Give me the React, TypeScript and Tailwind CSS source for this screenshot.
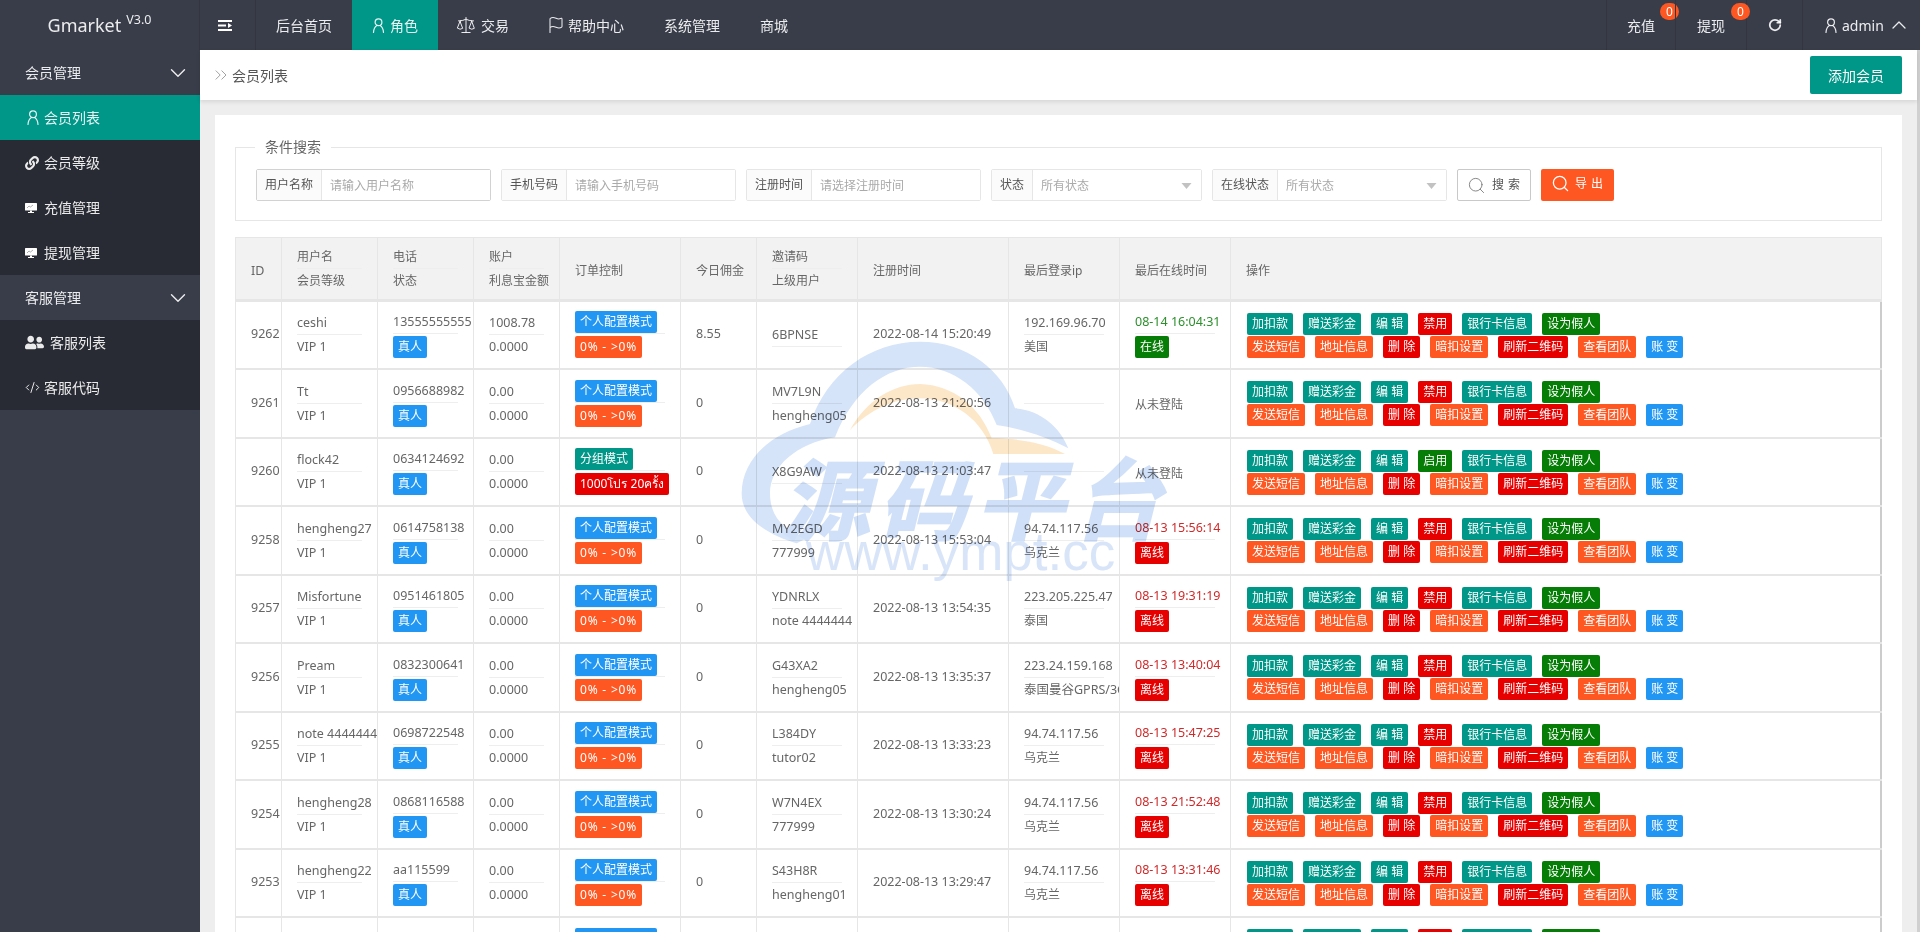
import { ChevronDown, ChevronUp, ChevronsRight, CodeXml, Flag, RotateCw, Scale, Search } from "lucide-react";
import { FaLink, FaUserFriends } from "react-icons/fa";

const teal = "bg-[#009688]";
const orange = "bg-[#FF5722]";
const red = "bg-[#e60000]";
const green = "bg-[#067d06]";
const blue = "bg-[#2196F3]";

type Row = {
    id: string;
    name: string;
    phone: string;
    real?: boolean;
    money: string;
    groupMode?: boolean;
    today: string;
    code: string;
    parent: string;
    date: string;
    ip: string;
    area: string;
    last: string;
    online?: boolean;
    enabled?: boolean;
};

const rows: Row[] = [
    { id: "9262", name: "ceshi", phone: "13555555555", money: "1008.78", today: "8.55", code: "6BPNSE", parent: "", date: "2022-08-14 15:20:49", ip: "192.169.96.70", area: "美国", last: "08-14 16:04:31", online: true },
    { id: "9261", name: "Tt", phone: "0956688982", money: "0.00", today: "0", code: "MV7L9N", parent: "hengheng05", date: "2022-08-13 21:20:56", ip: "", area: "", last: "" },
    { id: "9260", name: "flock42", phone: "0634124692", money: "0.00", groupMode: true, today: "0", code: "X8G9AW", parent: "", date: "2022-08-13 21:03:47", ip: "", area: "", last: "", enabled: true },
    { id: "9258", name: "hengheng27", phone: "0614758138", money: "0.00", today: "0", code: "MY2EGD", parent: "777999", date: "2022-08-13 15:53:04", ip: "94.74.117.56", area: "乌克兰", last: "08-13 15:56:14" },
    { id: "9257", name: "Misfortune", phone: "0951461805", money: "0.00", today: "0", code: "YDNRLX", parent: "note 4444444", date: "2022-08-13 13:54:35", ip: "223.205.225.47", area: "泰国", last: "08-13 19:31:19" },
    { id: "9256", name: "Pream", phone: "0832300641", money: "0.00", today: "0", code: "G43XA2", parent: "hengheng05", date: "2022-08-13 13:35:37", ip: "223.24.159.168", area: "泰国曼谷GPRS/3G", last: "08-13 13:40:04" },
    { id: "9255", name: "note 4444444", phone: "0698722548", money: "0.00", today: "0", code: "L384DY", parent: "tutor02", date: "2022-08-13 13:33:23", ip: "94.74.117.56", area: "乌克兰", last: "08-13 15:47:25" },
    { id: "9254", name: "hengheng28", phone: "0868116588", money: "0.00", today: "0", code: "W7N4EX", parent: "777999", date: "2022-08-13 13:30:24", ip: "94.74.117.56", area: "乌克兰", last: "08-13 21:52:48" },
    { id: "9253", name: "hengheng22", phone: "aa115599", money: "0.00", today: "0", code: "S43H8R", parent: "hengheng01", date: "2022-08-13 13:29:47", ip: "94.74.117.56", area: "乌克兰", last: "08-13 13:31:46" },
    { id: "9252", name: "hengheng21", phone: "0868116500", money: "0.00", today: "0", code: "K22M7Q", parent: "hengheng01", date: "2022-08-13 13:20:11", ip: "94.74.117.56", area: "乌克兰", last: "08-13 13:25:02" },
];

function Tag({ color, children }: { color: string; children: React.ReactNode }) {
    return <span className={`${color} block h-[22px] w-fit rounded-[2px] px-[5px] text-[12px] leading-[22px] whitespace-nowrap text-white`}>{children}</span>;
}

function UserIcon({ className }: { className?: string }) {
    return (
        <svg viewBox="0 0 12 15" fill="none" stroke="currentColor" strokeWidth="1.2" className={className}>
            <circle cx="6" cy="4.2" r="3.4" />
            <path d="M1 14.5C1.2 11 2.6 8.8 4.4 7.6M11 14.5C10.8 11 9.4 8.8 7.6 7.6" strokeLinecap="round" />
        </svg>
    );
}

function BoardIcon() {
    return (
        <svg viewBox="0 0 12 12" className="h-[12px] w-[12px] text-white" fill="currentColor">
            <rect x="0" y="1" width="12" height="7.5" rx="0.6" />
            <path d="M5 8.5h2v1.5h2V11H3v-1h2z" />
            <path d="M2 6l2-2 1.5 1L8 3" stroke="#777" strokeWidth="0.6" fill="none" />
        </svg>
    );
}

function Line({ children, cjk }: { children?: React.ReactNode; cjk?: boolean }) {
    return <div className={`${cjk ? "text-[12px]" : "text-[12.5px]"} h-[23px] leading-[23px] whitespace-nowrap`}>{children}</div>;
}

function Stack({ top, bottom, cjkTop, cjkBottom }: { top?: React.ReactNode; bottom?: React.ReactNode; cjkTop?: boolean; cjkBottom?: boolean }) {
    return (
        <div>
            {top ? <Line cjk={cjkTop}>{top}</Line> : null}
            <div className="border-b border-[#eeeeee]" />
            {bottom ? <Line cjk={cjkBottom}>{bottom}</Line> : null}
        </div>
    );
}

function BadgeStack({ top, children, topClass }: { top: string; children: React.ReactNode; topClass?: string }) {
    return (
        <div>
            <div className={`${topClass ?? ""} h-[23px] border-b border-[#eeeeee] text-[12.5px] leading-[22px] whitespace-nowrap`}>{top}</div>
            <div className="mt-[2px] h-[22px]">{children}</div>
        </div>
    );
}

function FormGroup({ label, labelW, w, placeholder, select, strong }: { label: string; labelW: string; w: string; placeholder: string; select?: boolean; strong?: boolean }) {
    return (
        <div className={`${w} flex h-[32px] shrink-0 rounded-[2px] border ${strong ? "border-[#d2d2d2]" : "border-[#e6e6e6]"}`}>
            <div className={`${labelW} flex shrink-0 items-center justify-center border-r border-[#e6e6e6] bg-[#fbfbfb] text-[12px] text-[#555]`}>{label}</div>
            <div className="relative flex-1">
                <input readOnly placeholder={placeholder} className="h-full w-full bg-white px-[8px] pt-[1px] text-[12px] outline-none placeholder:text-[#aaaaaa]" />
                {select ? (
                    <svg viewBox="0 0 10 6" className="absolute top-[13px] right-[9px] h-[6px] w-[11px] text-[#c2c2c2]" fill="currentColor">
                        <path d="M0 0h10L5 6z" />
                    </svg>
                ) : null}
            </div>
        </div>
    );
}

function SideGroup({ label }: { label: string }) {
    return (
        <div className="flex h-[45px] items-center justify-between bg-[#393d49] pr-[9px] pl-[25px] text-[14px] text-white/90">
            <span>{label}</span>
            <ChevronDown size={26} strokeWidth={1.3} />
        </div>
    );
}

function SideItem({ icon, label, active, gap }: { icon: React.ReactNode; label: string; active?: boolean; gap?: string }) {
    return (
        <div className={`${active ? "bg-[#009688]" : "bg-[#282b33]"} flex h-[45px] items-center pl-[25px] text-[14px] text-white/90`}>
            <span className={`${gap ?? "w-[19px]"} flex shrink-0 items-center`}>{icon}</span>
            <span>{label}</span>
        </div>
    );
}

function HeadCell({ top, bottom }: { top: string; bottom?: string }) {
    if (!bottom) return <span className="text-[12px]">{top}</span>;
    return <Stack top={top} bottom={bottom} cjkTop cjkBottom />;
}

function Actions({ enabled }: { enabled?: boolean }) {
    return (
        <div className="ml-[1px] w-[460px] pt-[1px]">
            <div className="flex h-[23px] gap-[10px]">
                <Tag color={teal}>加扣款</Tag>
                <Tag color={teal}>赠送彩金</Tag>
                <Tag color={teal}>编 辑</Tag>
                <Tag color={enabled ? green : red}>{enabled ? "启用" : "禁用"}</Tag>
                <Tag color={teal}>银行卡信息</Tag>
                <Tag color={green}>设为假人</Tag>
            </div>
            <div className="flex h-[22px] gap-[10px]">
                <Tag color={orange}>发送短信</Tag>
                <Tag color={orange}>地址信息</Tag>
                <Tag color={red}>删 除</Tag>
                <Tag color={orange}>暗扣设置</Tag>
                <Tag color={red}>刷新二维码</Tag>
                <Tag color={orange}>查看团队</Tag>
                <Tag color={blue}>账 变</Tag>
            </div>
        </div>
    );
}

const thClass = "border border-[#e6e6e6] border-b-[3px] px-[15px] text-left font-normal whitespace-nowrap text-[#666]";
const tdClass = "overflow-hidden border border-[#e6e6e6] border-b-2 px-[15px] text-[#666]";

export default function App() {
    return (
        <div className="relative h-[932px] w-full overflow-hidden bg-[#eeeeee] font-['Noto_Sans','Noto_Sans_CJK_SC',sans-serif]">
            {/* top nav */}
            <header className="flex h-[50px] items-stretch bg-[#393d49] text-[14px] text-white/90">
                <div className="flex w-[200px] shrink-0 items-start justify-center border-r border-[#33363f] pt-[11px]">
                    <span className="text-[18px] leading-[28px] text-white/90">Gmarket</span>
                    <span className="ml-[5px] text-[12.5px] leading-[18px] text-white/90">V3.0</span>
                </div>
                <div className="flex w-[56px] shrink-0 items-center justify-center border-r border-[#33363f] pr-[6px]">
                    <svg viewBox="0 0 14 11" className="h-[11px] w-[14px]" fill="white">
                        <rect width="14" height="2" />
                        <rect y="4.5" width="8" height="2" />
                        <rect y="9" width="14" height="2" />
                        <path d="M10 3l4 2.5L10 8z" />
                    </svg>
                </div>
                <div className="flex items-center px-[20px]">后台首页</div>
                <div className="flex items-center gap-[5px] bg-[#009688] px-[20px]">
                    <UserIcon className="h-[15px] w-[13px]" />
                    角色
                </div>
                <div className="flex items-center gap-[5px] px-[20px]">
                    <Scale size={20} strokeWidth={1.2} className="-ml-[2px]" />
                    交易
                </div>
                <div className="flex items-center gap-[3px] px-[20px]">
                    <Flag size={18} strokeWidth={1.4} className="-ml-[2px]" />
                    帮助中心
                </div>
                <div className="flex items-center px-[20px]">系统管理</div>
                <div className="flex items-center px-[20px]">商城</div>
                <div className="ml-auto flex items-stretch">
                    <div className="relative flex w-[69px] items-center justify-center border-l border-[#33363f]">
                        <span>充值</span>
                        <span className="absolute top-[3px] right-[-4px] flex h-[17px] w-[19px] items-center justify-center rounded-full bg-[#FF5722] text-[12px] text-white">0</span>
                    </div>
                    <div className="relative flex w-[71px] items-center justify-center border-l border-[#33363f]">
                        <span>提现</span>
                        <span className="absolute top-[3px] right-[-4px] flex h-[17px] w-[19px] items-center justify-center rounded-full bg-[#FF5722] text-[12px] text-white">0</span>
                    </div>
                    <div className="flex w-[56px] items-center justify-center border-l border-[#33363f]">
                        <RotateCw size={14} strokeWidth={3} />
                    </div>
                    <div className="flex w-[118px] items-center border-l border-[#33363f] pl-[22px]">
                        <UserIcon className="h-[15px] w-[12px]" />
                        <span className="ml-[5px] text-[14px]">admin</span>
                        <ChevronUp size={24} strokeWidth={1.3} className="ml-[3px]" />
                    </div>
                </div>
            </header>

            <div className="flex h-[882px]">
                {/* side menu */}
                <aside className="w-[200px] shrink-0 bg-[#393d49]">
                    <SideGroup label="会员管理" />
                    <SideItem active icon={<UserIcon className="ml-[2px] h-[15px] w-[12px]" />} label="会员列表" />
                    <SideItem icon={<FaLink size={14} />} label="会员等级" />
                    <SideItem icon={<BoardIcon />} label="充值管理" />
                    <SideItem icon={<BoardIcon />} label="提现管理" />
                    <SideGroup label="客服管理" />
                    <SideItem gap="w-[25px]" icon={<FaUserFriends size={19} />} label="客服列表" />
                    <SideItem icon={<CodeXml size={15} strokeWidth={1.6} />} label="客服代码" />
                </aside>

                {/* page body */}
                <main className="flex min-w-0 flex-1 flex-col">
                    <div className="relative flex h-[50px] shrink-0 items-center justify-between bg-white pr-[15px] pl-[11px] shadow-[0_2px_4px_rgba(0,0,0,0.1)]">
                        <div className="flex items-center gap-[1px] text-[14px] text-[#555]">
                            <ChevronsRight size={20} strokeWidth={1.1} className="text-[#999]" />
                            会员列表
                        </div>
                        <button className="h-[38px] w-[92px] rounded-[2px] bg-[#009688] text-[14px] text-white">添加会员</button>
                    </div>

                    <div className="mx-[15px] mt-[15px] flex-1 bg-white px-[20px] pt-[22px]">
                        <fieldset className="h-[84px] border border-[#e6e6e6] px-[20px]">
                            <legend className="ml-[-1px] h-[20px] px-[10px] text-[14px] leading-[20px] text-[#666]">条件搜索</legend>
                            <div className="mt-[12px] flex gap-[10px]">
                                <FormGroup strong label="用户名称" labelW="w-[65px]" w="w-[235px]" placeholder="请输入用户名称" />
                                <FormGroup label="手机号码" labelW="w-[65px]" w="w-[235px]" placeholder="请输入手机号码" />
                                <FormGroup label="注册时间" labelW="w-[65px]" w="w-[235px]" placeholder="请选择注册时间" />
                                <FormGroup select label="状态" labelW="w-[41px]" w="w-[211px]" placeholder="所有状态" />
                                <FormGroup select label="在线状态" labelW="w-[65px]" w="w-[235px]" placeholder="所有状态" />
                                <button className="flex h-[32px] w-[74px] shrink-0 items-center gap-[6px] rounded-[2px] border border-[#c9c9c9] bg-white pl-[9px] text-[12px] tracking-[4px] text-[#555]">
                                    <Search size={19} strokeWidth={1.1} className="text-[#777]" />
                                    搜索
                                </button>
                                <button className="flex h-[32px] w-[73px] shrink-0 items-center gap-[5px] rounded-[2px] bg-[#FF5722] pb-[3px] pl-[10px] text-[12px] tracking-[4px] text-white">
                                    <Search size={19} strokeWidth={1.6} />
                                    导出
                                </button>
                            </div>
                        </fieldset>

                        <table className="mt-[16px] w-full table-fixed border-collapse">
                            <colgroup>
                                <col className="w-[46px]" />
                                <col className="w-[96px]" />
                                <col className="w-[96px]" />
                                <col className="w-[86px]" />
                                <col className="w-[121px]" />
                                <col className="w-[76px]" />
                                <col className="w-[101px]" />
                                <col className="w-[151px]" />
                                <col className="w-[111px]" />
                                <col className="w-[111px]" />
                                <col />
                            </colgroup>
                            <thead>
                                <tr className="h-[63px] bg-[#f2f2f2]">
                                    <th className={thClass}><span className="text-[12.5px]">ID</span></th>
                                    <th className={thClass}><HeadCell top="用户名" bottom="会员等级" /></th>
                                    <th className={thClass}><HeadCell top="电话" bottom="状态" /></th>
                                    <th className={thClass}><HeadCell top="账户" bottom="利息宝金额" /></th>
                                    <th className={thClass}><HeadCell top="订单控制" /></th>
                                    <th className={thClass}><HeadCell top="今日佣金" /></th>
                                    <th className={thClass}><HeadCell top="邀请码" bottom="上级用户" /></th>
                                    <th className={thClass}><HeadCell top="注册时间" /></th>
                                    <th className={thClass}><HeadCell top="最后登录ip" /></th>
                                    <th className={thClass}><HeadCell top="最后在线时间" /></th>
                                    <th className={thClass}><HeadCell top="操作" /></th>
                                </tr>
                            </thead>
                            <tbody>
                                {rows.map((r, i) => (
                                    <tr key={r.id} className={i % 2 === 0 ? "h-[68px]" : "h-[69px]"}>
                                        <td className={`${tdClass} text-[12.5px]`}>{r.id}</td>
                                        <td className={tdClass}><Stack top={r.name} bottom="VIP 1" /></td>
                                        <td className={tdClass}>
                                            <BadgeStack top={r.phone}><Tag color={blue}>真人</Tag></BadgeStack>
                                        </td>
                                        <td className={tdClass}><Stack top={r.money} bottom="0.0000" /></td>
                                        <td className={tdClass}>
                                            <div className="h-[23px] border-b border-[#eeeeee]">
                                                <Tag color={r.groupMode ? teal : blue}>{r.groupMode ? "分组模式" : "个人配置模式"}</Tag>
                                            </div>
                                            <div className="mt-[2px] h-[22px]">
                                                {r.groupMode ? <Tag color={red}>1000โปร 20ครั้ง</Tag> : <Tag color={orange}><span className="tracking-[0.8px]">0% - &gt;0%</span></Tag>}
                                            </div>
                                        </td>
                                        <td className={`${tdClass} text-[12.5px]`}>{r.today}</td>
                                        <td className={tdClass}><Stack top={r.code} bottom={r.parent} /></td>
                                        <td className={`${tdClass} text-[12.5px] whitespace-nowrap`}>{r.date}</td>
                                        <td className={tdClass}><Stack top={r.ip} bottom={r.area} cjkBottom={!r.area.includes("GPRS")} /></td>
                                        <td className={tdClass}>
                                            {r.last ? (
                                                <BadgeStack top={r.last} topClass={r.online ? "text-[#2c8f2c]" : "text-[#cf2a2a]"}>
                                                    <Tag color={r.online ? green : red}>{r.online ? "在线" : "离线"}</Tag>
                                                </BadgeStack>
                                            ) : (
                                                <span className="text-[12px]">从未登陆</span>
                                            )}
                                        </td>
                                        <td className={`${tdClass} border-r-2 border-r-[#cccccc]`}><Actions enabled={r.enabled} /></td>
                                    </tr>
                                ))}
                            </tbody>
                        </table>
                    </div>
                </main>
                <div className="w-[3px] shrink-0 bg-[#d0d0d0]" />
            </div>

            {/* watermark over the table */}
            <div className="pointer-events-none absolute top-[330px] left-[720px] h-[260px] w-[520px] mix-blend-multiply">
                <svg viewBox="0 0 1560 780" className="absolute inset-0 h-full w-full">
                    <path
                        fill="#d5e4f9"
                        d="M230 640C130 610 65 560 65 490C65 390 150 310 270 282C320 130 450 35 600 35C740 35 850 120 885 235C960 240 1020 290 1045 355C980 320 900 295 830 285C790 180 700 110 600 110C500 110 400 180 345 322C230 340 150 410 150 490C150 560 190 600 260 625Z"
                    />
                    <path
                        fill="#fde7c9"
                        d="M390 300C440 210 520 162 600 162C700 165 780 230 815 325C900 325 980 340 1035 372L820 372C790 270 700 205 600 205C520 205 450 240 390 300Z"
                    />
                </svg>
                <div className="absolute top-[109px] left-[62px] text-[88px] leading-[120px] font-bold tracking-[9px] whitespace-nowrap text-[#d0e0f8] italic [-webkit-text-stroke:2px_#d0e0f8]">源码平台</div>
                <div className="absolute top-[187px] left-[86px] font-['Liberation_Sans',sans-serif] text-[53px] leading-[70px] whitespace-nowrap text-[#d8e5f9]">www.ympt.cc</div>
            </div>
        </div>
    );
}
